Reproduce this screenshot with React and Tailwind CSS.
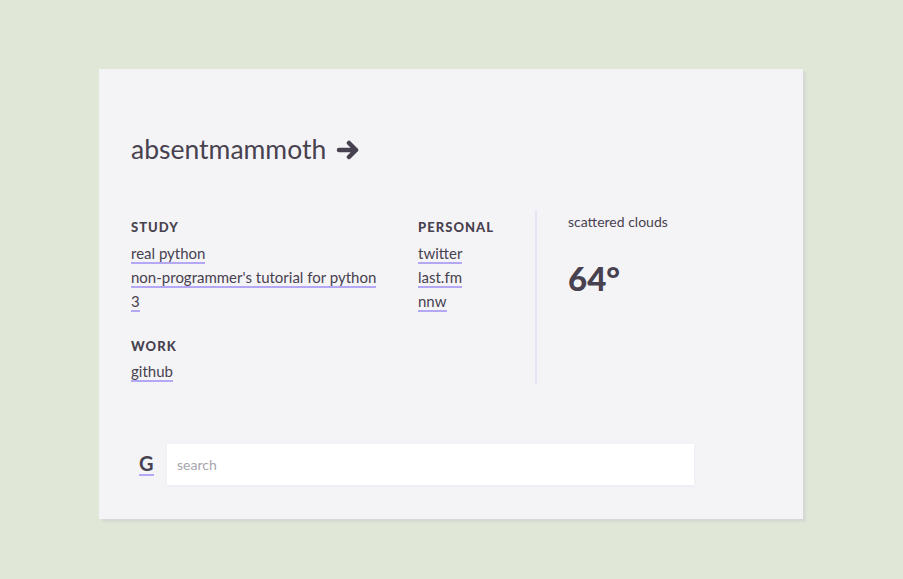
import React from 'react';

const link = "text-[#48414f] border-b-2 border-[#b4a8f6] no-underline";

const Section = ({ title, links, className = "" }) => (
  <div className={className}>
    <h2 className="text-[13px] font-black tracking-[0.08em] uppercase text-[#48414f] mb-[3px]">{title}</h2>
    <ul className="flex flex-col">
      {links.map((l) => (
        <li key={l} className="text-[15px] leading-[24px]">
          <a href="#" className={link}>{l}</a>
        </li>
      ))}
    </ul>
  </div>
);

export default function App() {
  return (
    <div className="min-h-[579px] bg-[#e0e7d7] pt-[69px] font-['Lato',sans-serif] text-[#48414f]">
      <div className="ml-[99px] w-[704px] h-[450px] bg-[#f4f4f7] shadow-[3px_3px_2px_#d6d9d3] px-[32px] pt-[64px]">
        <h1 className="flex items-center gap-[10px] text-[26.5px] leading-[32px] text-[#48414f]">
          absentmammoth
          <svg width="26" height="20" viewBox="0 0 26 20" className="mt-[2px]">
            <path d="M3 10 H20 M13 3 L20 10 L13 17" fill="none" stroke="#48414f" strokeWidth="4.5" strokeLinecap="round" strokeLinejoin="round" />
          </svg>
        </h1>

        <div className="flex mt-[45px]">
          <div className="w-[287px] pt-[8px]">
            <div className="w-[250px]">
              <Section title="study" links={["real python", "non-programmer's tutorial for python 3"]} />
              <Section title="work" links={["github"]} className="mt-[24px]" />
            </div>
          </div>
          <div className="w-[117px] pt-[8px]">
            <Section title="personal" links={["twitter", "last.fm", "nnw"]} />
          </div>
          <div className="border-l-2 border-[#e6e5f3] pl-[31px] h-[174px]">
            <p className="text-[14px] leading-[20px] mt-[2px]">scattered clouds</p>
            <p className="text-[33px] font-black leading-[40px] mt-[26px]">64°</p>
          </div>
        </div>

        <div className="flex items-center mt-[60px]">
          <a href="#" className="w-[36px] pl-[8px]">
            <span className="text-[20px] font-bold leading-[22px] border-b-2 border-[#b4a8f6] inline-block">G</span>
          </a>
          <input
            type="text"
            placeholder="search"
            className="w-[527px] h-[41px] bg-white px-[10px] text-[14px] outline-none shadow-[0_1px_3px_#e9e8f4] placeholder:text-[#a8a6ad]"
          />
        </div>
      </div>
    </div>
  );
}
